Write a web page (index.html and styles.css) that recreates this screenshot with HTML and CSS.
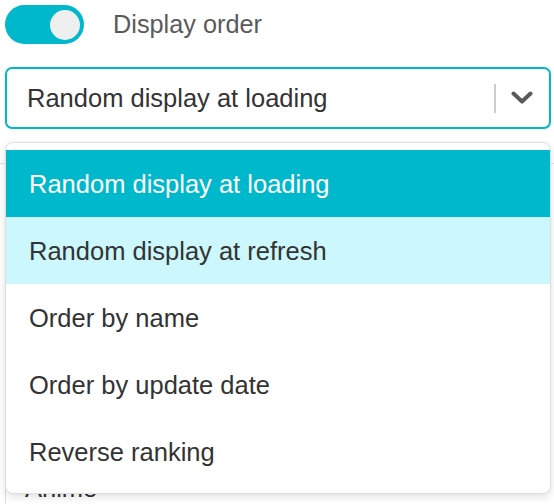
FILE: index.html
```html
<!DOCTYPE html>
<html lang="en">
<head>
<meta charset="utf-8">
<title>Display order</title>
<link rel="stylesheet" href="styles.css">
</head>
<body>
<div class="page">
  <div class="toggle-row">
    <div class="toggle"><span class="knob"></span></div>
    <span class="toggle-label">Display order</span>
  </div>

  <div class="select">
    <span class="select-value">Random display at loading</span>
    <span class="select-sep"></span>
    <svg class="chevron" width="22" height="14" viewBox="0 0 22 14"><path d="M2.5 2.5 L11 10.5 L19.5 2.5" fill="none" stroke="#5a5a5a" stroke-width="4" stroke-linecap="round" stroke-linejoin="round"/></svg>
  </div>

  <div class="backdrop">
    <div class="backdrop-body">
      <div class="back-row">
        <span class="back-btn"><span class="back-mark"></span></span>
      </div>
      <div class="back-title">Anime</div>
    </div>
  </div>

  <ul class="menu">
    <li class="item item-selected">Random display at loading</li>
    <li class="item item-hover">Random display at refresh</li>
    <li class="item">Order by name</li>
    <li class="item">Order by update date</li>
    <li class="item">Reverse ranking</li>
  </ul>
</div>
</body>
</html>
```

FILE: styles.css
```css
html, body {
  margin: 0;
  padding: 0;
  background: #ffffff;
  overflow: hidden;
}

body {
  font-family: "Liberation Sans", Arial, Helvetica, sans-serif;
  color: #333333;
}

.page {
  position: relative;
  padding: 5px 3px 0 5px;
  height: 504px;
  box-sizing: border-box;
  overflow: hidden;
}

.toggle-row {
  display: flex;
  align-items: center;
  gap: 29px;
  height: 39px;
}

.toggle {
  width: 79px;
  height: 39px;
  border-radius: 20px;
  background: #00b8cc;
  display: flex;
  align-items: center;
  justify-content: flex-end;
  padding-right: 4px;
  box-sizing: border-box;
}

.knob {
  width: 30px;
  height: 30px;
  border-radius: 50%;
  background: #efefef;
}

.toggle-label {
  font-size: 25.3px;
  color: #5a5a5a;
}

.select {
  margin-top: 23px;
  height: 62px;
  box-sizing: border-box;
  border: 2px solid #00b8cc;
  border-radius: 7px;
  display: flex;
  align-items: center;
  padding-left: 20px;
  padding-right: 16px;
}

.select-value {
  flex: 1;
  font-size: 25.5px;
  color: #333333;
}

.select-sep {
  width: 2px;
  height: 29px;
  background: #cccccc;
  margin-right: 15px;
}

.chevron {
  display: block;
}

.backdrop {
  margin: 34px -8px 0 -5px;
  border-top: 1px solid #e2e2e2;
}

.backdrop-body {
  margin-left: 5px;
  border-left: 1px solid #dddddd;
  height: 360px;
  display: flex;
  flex-direction: column;
}

.back-row {
  display: flex;
  justify-content: flex-end;
  margin-top: 133px;
}

.back-btn {
  width: 90px;
  height: 72px;
  margin-right: -85px;
  background: #dedede;
  border-radius: 4px;
  display: flex;
  align-items: center;
  padding-left: 0;
}

.back-mark {
  width: 3px;
  height: 14px;
  margin-left: 0;
  background: #555555;
  border-radius: 1px;
}

.back-title {
  margin-top: 104px;
  margin-left: 19px;
  font-size: 25.5px;
  line-height: 30px;
  color: #333333;
}

.menu {
  position: absolute;
  top: 142px;
  left: 5px;
  width: 546px;
  margin: 0;
  padding: 7px 0 8px;
  list-style: none;
  box-sizing: border-box;
  background: #ffffff;
  border: 1px solid #dedede;
  border-radius: 8px;
  box-shadow: 0 3px 8px rgba(0, 0, 0, 0.12);
}

.item {
  height: 67px;
  display: flex;
  align-items: center;
  padding-left: 23px;
  padding-top: 2px;
  box-sizing: border-box;
  font-size: 25.5px;
  color: #333333;
}

.item-selected {
  background: #00b8cc;
  color: #ffffff;
}

.item-hover {
  background: #ccf7fc;
}
```
